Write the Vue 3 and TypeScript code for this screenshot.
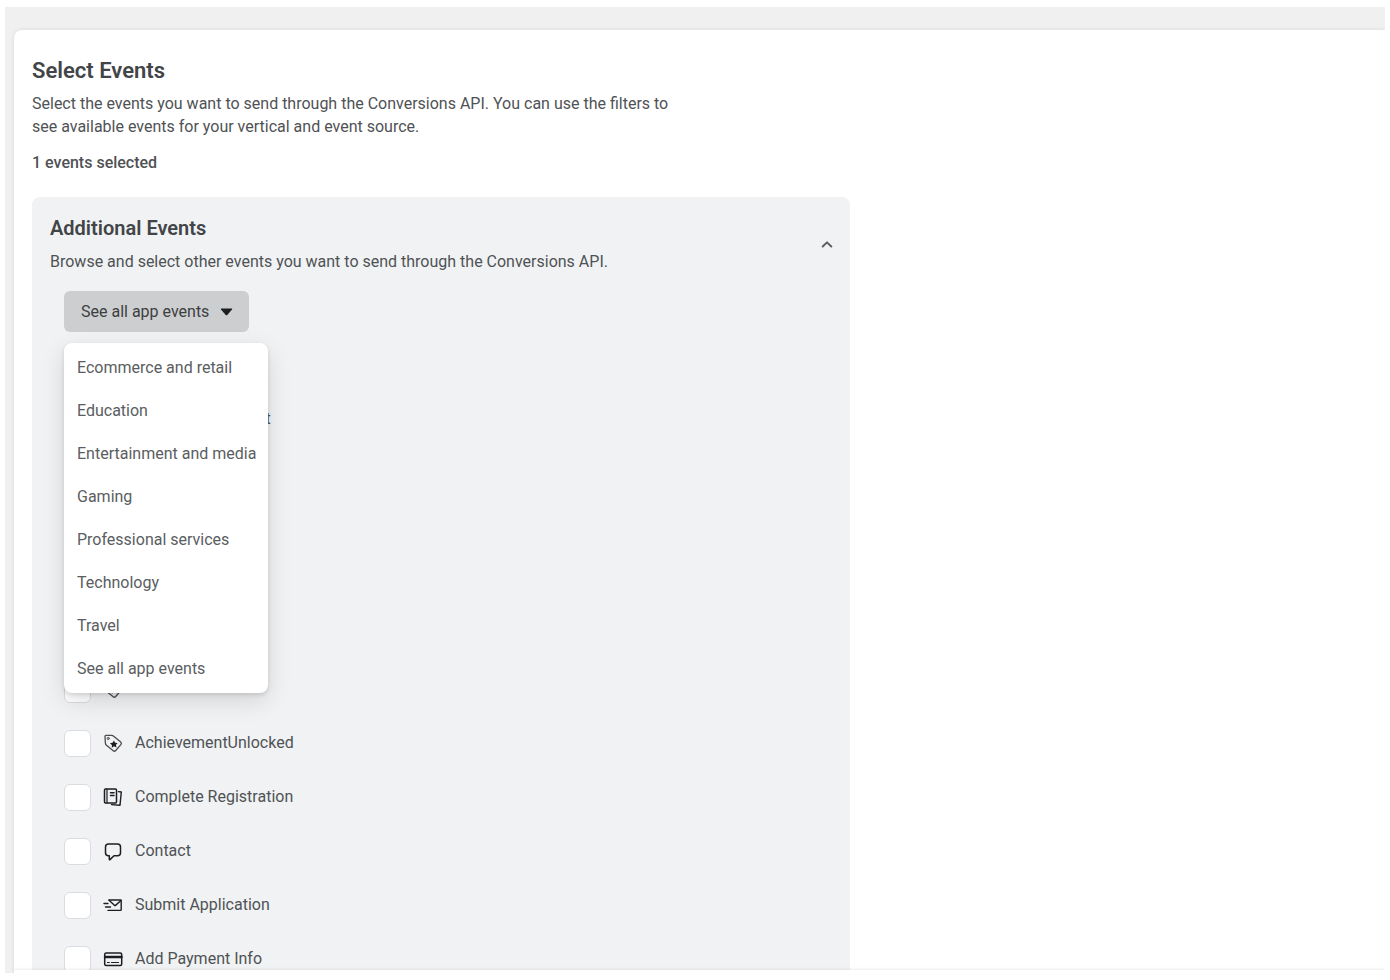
<script setup lang="ts">
import { ref } from 'vue'

type IconName = 'tag' | 'pages' | 'chat' | 'send' | 'card'

interface EventRow {
  id: string
  label: string
  icon: IconName
  selected: boolean
  underMenu?: boolean
}

const expanded = ref(true)
const menuOpen = ref(true)
const filter = ref('See all app events')

const filters: string[] = [
  'Ecommerce and retail',
  'Education',
  'Entertainment and media',
  'Gaming',
  'Professional services',
  'Technology',
  'Travel',
  'See all app events',
]

const events = ref<EventRow[]>([
  { id: 'purchase', label: 'Purchase', icon: 'card', selected: true, underMenu: true },
  { id: 'product', label: 'Customize Product', icon: 'tag', selected: false },
  { id: 'cart', label: 'Add to Cart', icon: 'tag', selected: false, underMenu: true },
  { id: 'search', label: 'Search', icon: 'tag', selected: false, underMenu: true },
  { id: 'view', label: 'View Content', icon: 'pages', selected: false, underMenu: true },
  { id: 'group', label: 'Group Registration', icon: 'pages', selected: false },
  { id: 'rate', label: 'Rate', icon: 'tag', selected: false, underMenu: true },
  { id: 'achievement', label: 'AchievementUnlocked', icon: 'tag', selected: false },
  { id: 'registration', label: 'Complete Registration', icon: 'pages', selected: false },
  { id: 'contact', label: 'Contact', icon: 'chat', selected: false },
  { id: 'application', label: 'Submit Application', icon: 'send', selected: false },
  { id: 'payment', label: 'Add Payment Info', icon: 'card', selected: false },
])

function choose(name: string) {
  filter.value = name
  menuOpen.value = false
}
</script>

<template>
  <div class="frame">
    <main class="card">
      <div class="content">
        <h1>Select Events</h1>
        <p class="intro">
          Select the events you want to send through the Conversions API. You can use the filters to
          see available events for your vertical and event source.
        </p>
        <p class="count">1 events selected</p>

        <section class="panel">
          <header class="panel-head">
            <div>
              <h2>Additional Events</h2>
              <p>Browse and select other events you want to send through the Conversions API.</p>
            </div>
            <button
              class="collapse"
              type="button"
              aria-label="Toggle additional events"
              :aria-expanded="expanded"
              @click="expanded = !expanded"
            >
              <svg width="14" height="10" viewBox="0 0 14 10" fill="none">
                <path d="M2.700 6.500 7 2.400l4.300 4.100" stroke="#5c6063" stroke-width="2" stroke-linecap="round" stroke-linejoin="round" />
              </svg>
            </button>
          </header>

          <div v-if="expanded" class="panel-body">
            <div class="picker">
              <button class="trigger" type="button" :aria-expanded="menuOpen" @click="menuOpen = !menuOpen">
                <span>{{ filter }}</span>
                <svg width="13" height="8" viewBox="0 0 13 8">
                  <path d="M1.500 0.500h10q1.300 0 .5 1L7.500 6.800q-1 1-2 0L1 1.500q-.8-1 .5-1Z" fill="#1c1e21" />
                </svg>
              </button>
              <div v-if="menuOpen" class="menu">
                <button v-for="name in filters" :key="name" type="button" @click="choose(name)">{{ name }}</button>
              </div>
            </div>

            <ul class="events">
              <li v-for="row in events" :key="row.id">
                <input :id="row.id" v-model="row.selected" type="checkbox" />
                <label :for="row.id">
                  <svg class="icon" width="20" height="20" viewBox="0 0 20 20" fill="none" stroke="#1c1e21" stroke-width="1.5" stroke-linecap="round" stroke-linejoin="round">
                    <g v-if="row.icon === 'tag'" stroke="#4a4d50" stroke-width="1.300">
                      <path d="M3 2.400h5.600q1.200 0 2.100.8l7 5.900q1.300 1.200.2 2.500l-5.200 5.900q-1.200 1.300-2.500.2L3.500 12.300q-1-.9-1.100-2.200L2 3.600q0-1.200 1-1.200Z" />
                      <circle cx="5.200" cy="5.500" r="1.100" stroke-width="1" />
                      <path d="m11 7.500 1 2.300 2.600.1-1.700 2 .7 2.600-2.600-1.200-2.200 1.400.1-2.700-2-1.700 2.600-.5Z" fill="#1c1e21" stroke="none" />
                    </g>
                    <g v-else-if="row.icon === 'pages'">
                      <rect x="1.500" y="2" width="12" height="14" rx="1" />
                      <path d="M4 2v14" stroke-width="1.200" />
                      <path d="M7.500 5.800h3.500M7.500 8.500h3.500" />
                      <path d="M15.500 4.600 18.300 5 17 18.300 8.500 17.600" stroke-width="1.400" />
                    </g>
                    <path v-else-if="row.icon === 'chat'" d="M5.500 3h9q3 0 3 3v5.800q0 3-3 3H11L7 18.600q-.7.500-.7-.3v-3.500h-.8q-3 0-3-3V6q0-3 3-3Z" />
                    <g v-else-if="row.icon === 'send'" stroke-width="1.400">
                      <path d="M6 5h11.500q.7 0 .7.700v9q0 .7-.7.700H5" />
                      <path d="m6 5.300 5.200 4.800q.8.700 1.600 0L18 5.500M1 8.500h4M2.500 12h5" />
                    </g>
                    <g v-else>
                      <rect x="1.700" y="4" width="17" height="12.500" rx="1.500" />
                      <path d="M2 8h16.500" stroke-width="2.400" />
                      <path d="M4.500 13.500h1.800M8.500 13.500h7" stroke-width="1.200" />
                    </g>
                  </svg>
                  <span :class="{ covered: menuOpen && row.underMenu }">{{ row.label }}</span>
                </label>
              </li>
            </ul>
          </div>
        </section>
      </div>
      <footer class="bottom-bar"></footer>
    </main>
  </div>
</template>

<style>
body {
  background: #fff;
}
</style>

<style scoped>
.frame,
.frame * {
  box-sizing: border-box;
}
.frame {
  display: flex;
  height: calc(100vh - 14px);
  margin: 7px 5px;
  padding: 23px 0 0 9px;
  overflow: hidden;
  background: #f0f0f0;
  color: #4f5255;
  font: 16px/23px Roboto, sans-serif;
}
h1,
h2,
p,
ul {
  margin: 0;
  padding: 0;
}
button {
  border: 0;
  background: none;
  color: inherit;
  font: inherit;
  cursor: pointer;
}
.card {
  display: flex;
  flex: 1;
  flex-direction: column;
  min-width: 0;
  border-radius: 8px 0 0 0;
  background: #fff;
  box-shadow: 0 0 4px rgba(0, 0, 0, 0.1);
}
.content {
  flex: 1;
  min-height: 0;
  padding: 27px 18px 0;
  overflow: hidden;
}
h1 {
  color: #424548;
  font-size: 22px;
  font-weight: 600;
  line-height: 28px;
}
.intro {
  max-width: 640px;
  margin-top: 7px;
}
.count {
  margin-top: 13px;
  font-weight: 500;
}
.panel {
  max-width: 818px;
  margin-top: 23px;
  padding: 19px 16px 40px 18px;
  border-radius: 8px;
  background: #f1f2f4;
}
.panel-head {
  display: flex;
  align-items: center;
  justify-content: space-between;
}
h2 {
  margin-bottom: 10px;
  color: #424548;
  font-size: 20px;
  font-weight: 600;
  line-height: 24px;
}
.collapse {
  display: flex;
  padding: 0;
}
.panel-body {
  padding: 18px 14px 0;
}
.picker {
  position: relative;
  width: max-content;
}
.trigger {
  display: flex;
  gap: 11px;
  align-items: center;
  height: 41px;
  padding: 0 16px 0 17px;
  border-radius: 6px;
  background: #cdced0;
  color: #3c3f42;
}
.menu {
  position: absolute;
  z-index: 1;
  top: 100%;
  left: 0;
  display: flex;
  flex-direction: column;
  margin-top: 11px;
  padding: 3px 0;
  border-radius: 8px;
  background: #fff;
  box-shadow: 0 2px 4px rgba(0, 0, 0, 0.12), 0 8px 24px rgba(0, 0, 0, 0.12);
}
.menu button {
  height: 43px;
  padding: 0 12px 0 13px;
  color: #5a5d61;
  text-align: left;
  white-space: nowrap;
}
.events {
  margin-top: 6px;
  list-style: none;
}
.events li {
  display: flex;
  align-items: center;
  height: 54px;
}
.events input {
  flex: none;
  width: 27px;
  height: 27px;
  margin: 0;
  border: 1px solid #dadcdf;
  border-radius: 6px;
  background: #fff;
  appearance: none;
}
.events input:checked {
  border-color: #1877f2;
  background: #1877f2;
}
.events label {
  display: flex;
  gap: 12px;
  align-items: center;
  padding-left: 12px;
}
.events span {
  padding-bottom: 2px;
}
.covered {
  visibility: hidden;
}
.icon {
  flex: none;
}
.bottom-bar {
  z-index: 2;
  height: 3px;
  background: #fff;
  box-shadow: 0 -1px 3px rgba(0, 0, 0, 0.08);
}
</style>
